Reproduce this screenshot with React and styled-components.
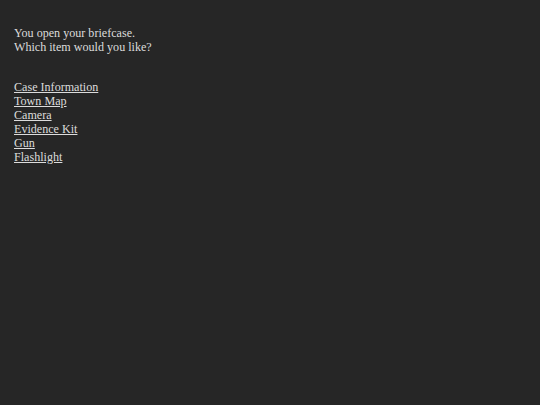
import styled, { createGlobalStyle } from "styled-components";

const Global = createGlobalStyle`
  html, body {
    margin: 0;
    padding: 0;
    background: #262626;
    height: 100%;
  }
`;

const Page = styled.div`
  padding: 26px 14px;
  font-family: "Liberation Serif", "Times New Roman", serif;
  font-size: 12.1px;
  line-height: 14px;
  color: #dcdcdc;
`;

const Intro = styled.p`
  margin: 0 0 26px;
`;

const ItemList = styled.div`
  display: flex;
  flex-direction: column;
  align-items: flex-start;
`;

const ItemLink = styled.a`
  color: #dcdcdc;
  text-decoration: underline;
  cursor: pointer;
`;

const items = [
  "Case Information",
  "Town Map",
  "Camera",
  "Evidence Kit",
  "Gun",
  "Flashlight",
];

export default function App() {
  return (
    <>
      <Global />
      <Page>
        <Intro>
          You open your briefcase.
          <br />
          Which item would you like?
        </Intro>
        <ItemList>
          {items.map((item) => (
            <ItemLink key={item} href="#">
              {item}
            </ItemLink>
          ))}
        </ItemList>
      </Page>
    </>
  );
}
